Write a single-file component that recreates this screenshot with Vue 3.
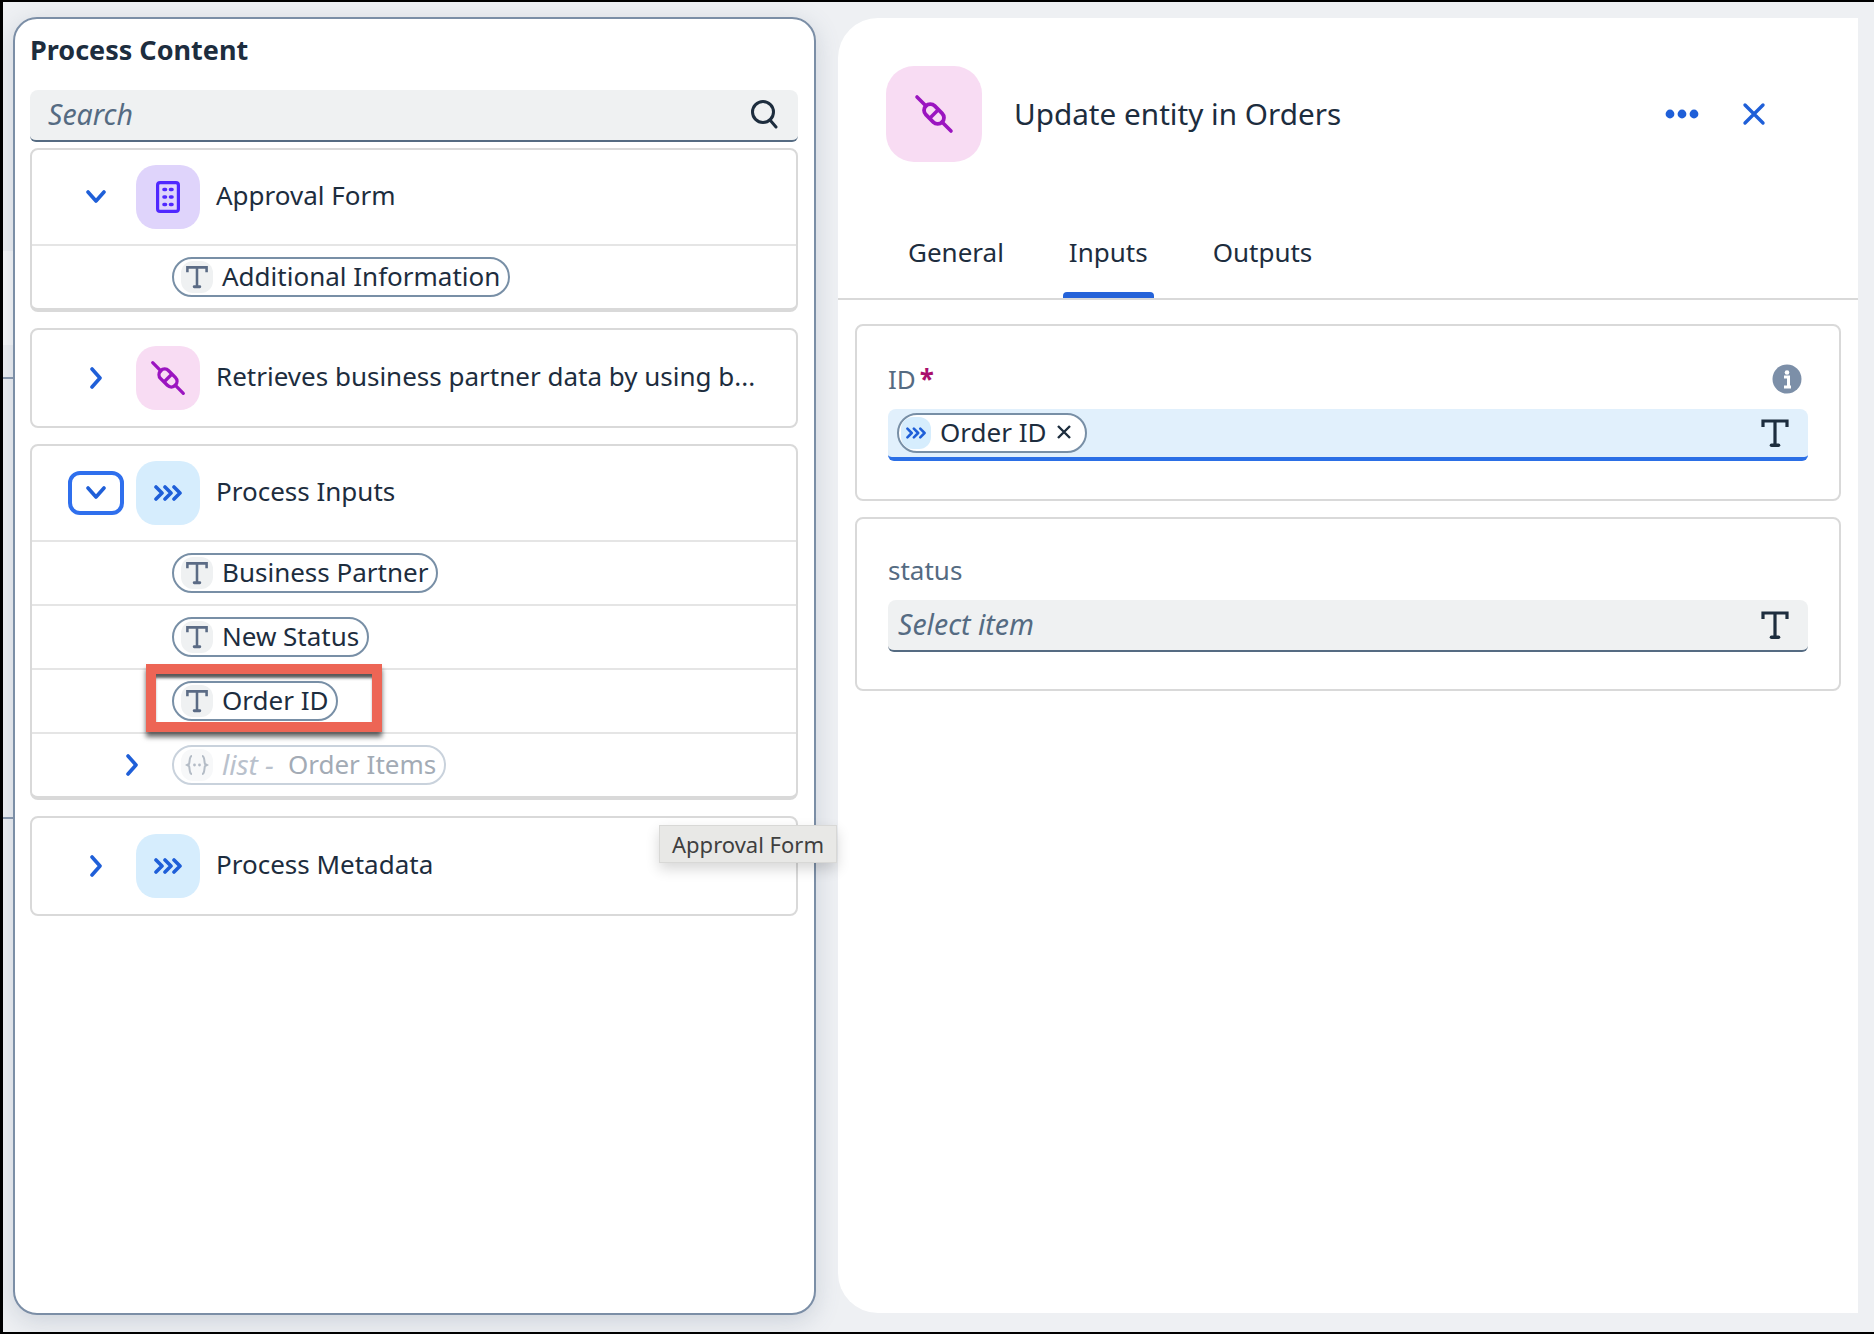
<template>
  <div class="page">
    <svg class="sprite" aria-hidden="true">
      <symbol id="i-link" viewBox="0 0 40 40">
        <path d="M3 3 L12 12 M28 28 L37 37" fill="none" stroke="currentColor" stroke-width="3.6" stroke-linecap="round" />
        <rect x="8.5" y="13.75" width="23" height="12.5" rx="6.25" transform="rotate(45 20 20)" fill="none" stroke="currentColor" stroke-width="3.8" />
        <path d="M15 25 L25 15" fill="none" stroke="currentColor" stroke-width="3.6" />
      </symbol>
      <symbol id="i-arrows" viewBox="0 0 28 16">
        <path d="M2 2 L8 8 L2 14 M11 2 L17 8 L11 14 M20 2 L26 8 L20 14" fill="none" stroke="currentColor" stroke-width="3.6" stroke-linecap="round" stroke-linejoin="round" />
      </symbol>
      <symbol id="i-t" viewBox="0 0 30 30">
        <path d="M3 9 V3 H27 V9 M15 3 V27" fill="none" stroke="currentColor" stroke-width="3.2" />
        <path d="M11.5 27.2 H18.5" fill="none" stroke="currentColor" stroke-width="3.6" stroke-linecap="round" />
      </symbol>
    </svg>

    <!-- background of the page behind the dialog, only visible in the left gutter -->
    <div class="gutter-band"></div>
    <div class="gutter-line first"></div>
    <div class="gutter-line second"></div>

    <section class="content-card">
      <h2 class="card-title">Process Content</h2>
      <div class="search">
        <span>Search</span>
        <svg width="30" height="30" viewBox="0 0 30 30">
          <circle cx="14" cy="13" r="10.5" fill="none" stroke="#1d2d3e" stroke-width="3" />
          <path d="M21 21 L27 28" stroke="#1d2d3e" stroke-width="3" stroke-linecap="round" />
        </svg>
      </div>

      <div class="group open">
        <div class="group-head">
          <button type="button" class="toggle">
            <svg width="20" height="14" viewBox="0 0 20 14"><path d="M2 2 L10 11 L18 2" /></svg>
          </button>
          <span class="tile purple">
            <svg width="24" height="32" viewBox="0 0 24 32">
              <rect x="1.6" y="1.6" width="20.8" height="28.8" rx="2.5" fill="none" stroke="currentColor" stroke-width="3.2" />
              <path d="M8 8.5 H9.5 M14.5 8.5 H16 M8 16 H9.5 M14.5 16 H16 M8 23.5 H9.5 M14.5 23.5 H16" stroke="currentColor" stroke-width="3.6" stroke-linecap="round" />
            </svg>
          </span>
          <span class="group-name">Approval Form</span>
        </div>
        <div class="row last">
          <span class="chip"><span class="chip-icon"><svg width="24" height="24"><use href="#i-t" /></svg></span>Additional Information</span>
        </div>
      </div>

      <div class="group">
        <div class="group-head">
          <button type="button" class="toggle">
            <svg width="14" height="22" viewBox="0 0 14 22"><path d="M3 2 L11 11 L3 20" /></svg>
          </button>
          <span class="tile pink"><svg width="36" height="36"><use href="#i-link" /></svg></span>
          <span class="group-name">Retrieves business partner data by using b...</span>
        </div>
      </div>

      <div class="group open">
        <div class="group-head">
          <button type="button" class="toggle focused">
            <svg width="20" height="14" viewBox="0 0 20 14"><path d="M2 2 L10 11 L18 2" /></svg>
          </button>
          <span class="tile blue"><svg width="28" height="16"><use href="#i-arrows" /></svg></span>
          <span class="group-name">Process Inputs</span>
        </div>
        <div v-for="name in inputs" :key="name" class="row">
          <span class="chip"><span class="chip-icon"><svg width="24" height="24"><use href="#i-t" /></svg></span>{{ name }}</span>
        </div>
        <div class="row last">
          <svg class="row-chevron" width="14" height="22" viewBox="0 0 14 22"><path d="M3 2 L11 11 L3 20" /></svg>
          <span class="chip disabled">
            <span class="chip-icon">
              <svg width="24" height="24" viewBox="0 0 24 24">
                <path d="M7 3 C4 3 5 9 4 11 L2 12 L4 13 C5 15 4 21 7 21 M17 3 C20 3 19 9 20 11 L22 12 L20 13 C19 15 20 21 17 21" fill="none" stroke="currentColor" stroke-width="2" />
                <circle cx="9.5" cy="12" r="1.4" fill="currentColor" />
                <circle cx="14.5" cy="12" r="1.4" fill="currentColor" />
              </svg>
            </span>
            <em>list -</em><span class="list-name">Order Items</span>
          </span>
        </div>
        <div class="marker"></div>
      </div>

      <div class="group">
        <div class="group-head">
          <button type="button" class="toggle">
            <svg width="14" height="22" viewBox="0 0 14 22"><path d="M3 2 L11 11 L3 20" /></svg>
          </button>
          <span class="tile blue"><svg width="28" height="16"><use href="#i-arrows" /></svg></span>
          <span class="group-name">Process Metadata</span>
        </div>
      </div>

      <div class="tooltip">Approval Form</div>
    </section>

    <section class="detail">
      <header class="detail-head">
        <span class="tile pink large"><svg width="40" height="40"><use href="#i-link" /></svg></span>
        <h1>Update entity in Orders</h1>
        <svg class="dots" width="34" height="10" viewBox="0 0 34 10">
          <circle cx="5" cy="5" r="4.4" /><circle cx="17" cy="5" r="4.4" /><circle cx="29" cy="5" r="4.4" />
        </svg>
        <svg class="close" width="24" height="24" viewBox="0 0 24 24">
          <path d="M3 3 L21 21 M21 3 L3 21" />
        </svg>
      </header>

      <nav class="tabs">
        <span v-for="tab in tabs" :key="tab" class="tab" :class="{ active: tab === 'Inputs' }">{{ tab }}</span>
      </nav>

      <div class="form">
        <div class="form-card">
          <div class="label-row">
            <label>ID<b>*</b></label>
            <svg width="30" height="30" viewBox="0 0 30 30">
              <circle cx="15" cy="15" r="14.5" fill="#7c8fa8" />
              <circle cx="15" cy="8.5" r="2.3" fill="#fff" />
              <path d="M12 13 H16.5 V22 M12 23 H19" fill="none" stroke="#fff" stroke-width="3" />
            </svg>
          </div>
          <div class="field filled">
            <span class="chip token">
              <span class="chip-icon token-icon"><svg width="20" height="12"><use href="#i-arrows" /></svg></span>
              Order ID
              <svg class="token-x" width="16" height="16" viewBox="0 0 16 16"><path d="M2 2 L14 14 M14 2 L2 14" /></svg>
            </span>
            <svg class="field-t" width="30" height="30"><use href="#i-t" /></svg>
          </div>
        </div>
        <div class="form-card">
          <div class="label-row"><label>status</label></div>
          <div class="field">
            <span class="placeholder">Select item</span>
            <svg class="field-t" width="30" height="30"><use href="#i-t" /></svg>
          </div>
        </div>
      </div>
    </section>
  </div>
</template>

<script setup>
const inputs = ['Business Partner', 'New Status', 'Order ID']
const tabs = ['General', 'Inputs', 'Outputs']
</script>

<style>
html,
body {
  margin: 0;
  background: #eef0f3;
}
</style>

<style scoped>
* {
  box-sizing: border-box;
}

.page {
  position: relative;
  display: flex;
  gap: 22px;
  width: 1874px;
  height: 1334px;
  padding: 15px 0 17px 10px;
  overflow: hidden;
  font-family: "Noto Sans", sans-serif;
  color: #1d2d3e;
  background: #eef0f3;
  border-top: 2px solid #000;
  border-bottom: 2px solid #000;
  border-left: 3px solid #000;
}

.sprite {
  position: absolute;
  width: 0;
  height: 0;
}

.gutter-band {
  position: absolute;
  top: 249px;
  left: 0;
  width: 10px;
  height: 94px;
  background: #f7f8f9;
}

.gutter-line {
  position: absolute;
  left: 0;
  width: 10px;
  height: 2px;
  background: #8a99ae;
}

.gutter-line.first {
  top: 375px;
}

.gutter-line.second {
  top: 815px;
}

.content-card {
  position: relative;
  flex: none;
  width: 803px;
  padding: 13px 16px 13px 15px;
  background: #fff;
  border: 2px solid #7b8ea6;
  border-radius: 24px;
  box-shadow: 0 6px 24px rgba(85, 107, 130, 0.22);
}

.card-title {
  margin: 0 0 22px;
  height: 36px;
  font-size: 27px;
  line-height: 36px;
  font-weight: 700;
}

.search {
  display: flex;
  align-items: center;
  justify-content: space-between;
  height: 52px;
  margin-bottom: 6px;
  padding: 0 19px 2px 18px;
  background: #eff1f2;
  border-bottom: 2px solid #556b82;
  border-radius: 8px 8px 6px 6px;
  font-size: 28.5px;
  font-style: italic;
  color: #556b82;
}

.group {
  margin-bottom: 16px;
  border: 2px solid #d9d9d9;
  border-radius: 8px;
  background: #fff;
}

.group.open {
  position: relative;
  border-bottom-width: 4px;
}

.group-head {
  display: flex;
  align-items: center;
  height: 96px;
  padding-left: 36px;
}

.open .group-head {
  border-bottom: 2px solid #e5e5e5;
}

.toggle {
  display: flex;
  flex: none;
  align-items: center;
  justify-content: center;
  width: 56px;
  height: 44px;
  margin-right: 12px;
  padding: 0;
  background: none;
  border: 3px solid transparent;
  border-radius: 12px;
}

.toggle.focused {
  border: 4px solid #2f6fed;
}

.toggle path,
.row-chevron path {
  fill: none;
  stroke: #1f5fd8;
  stroke-width: 3.6;
  stroke-linecap: round;
  stroke-linejoin: round;
}

.tile {
  display: flex;
  flex: none;
  align-items: center;
  justify-content: center;
  width: 64px;
  height: 64px;
  border-radius: 20px;
}

.tile.large {
  width: 96px;
  height: 96px;
  border-radius: 28px;
}

.purple {
  color: #5028ff;
  background: #dfd4fb;
}

.pink {
  color: #9b15c0;
  background: #f8dcf3;
}

.blue {
  color: #1f5fd8;
  background: #d6edfd;
}

.group-name {
  margin-left: 16px;
  padding-bottom: 4px;
  font-size: 26px;
  white-space: nowrap;
}

.row {
  display: grid;
  grid-template-columns: 140px auto;
  justify-content: start;
  align-items: center;
  height: 64px;
  border-bottom: 2px solid #e5e5e5;
}

.row.last {
  height: 62px;
  border-bottom: 0;
}

.row .chip {
  grid-column: 2;
}

.row-chevron {
  grid-column: 1;
  justify-self: end;
  margin-right: 33px;
}

.chip {
  display: inline-flex;
  align-items: center;
  height: 40px;
  padding: 0 8px 2px 7px;
  font-size: 26px;
  white-space: nowrap;
  background: #fff;
  border: 2px solid #788fa6;
  border-radius: 20px;
}

.chip-icon {
  display: flex;
  flex: none;
  align-items: center;
  justify-content: center;
  width: 32px;
  height: 32px;
  margin-right: 9px;
  margin-bottom: -2px;
  color: #5b6b85;
  background: #eff1f2;
  border-radius: 12px;
}

.chip.disabled {
  color: #a3abb5;
  border-color: #c9d2dc;
}

.chip.disabled .chip-icon {
  color: #b4bcc6;
  background: #f7f8f9;
}

.chip.disabled em {
  font-size: 28px;
  color: #b9c1cc;
}

.list-name {
  margin-left: 14px;
}

.marker {
  position: absolute;
  top: 218px;
  left: 114px;
  width: 236px;
  height: 68px;
  border: 10px solid #ed6555;
  box-shadow: 0 5px 5px rgba(0, 0, 0, 0.6), inset 0 5px 3px -1px rgba(0, 0, 0, 0.65);
  pointer-events: none;
}

.tooltip {
  position: absolute;
  top: 806px;
  left: 644px;
  width: 178px;
  height: 38px;
  font-size: 22px;
  line-height: 36px;
  text-align: center;
  color: #3f3f3f;
  background: #e8e8e6;
  border: 1px solid #d8d8d6;
  box-shadow: 0 6px 14px rgba(0, 0, 0, 0.16);
}

.detail {
  flex: none;
  width: 1020px;
  margin: 1px 0 2px;
  background: #fff;
  border-radius: 40px 0 0 40px;
}

.detail-head {
  display: flex;
  align-items: center;
  height: 96px;
  margin-top: 48px;
  padding-left: 48px;
}

.detail-head h1 {
  margin: 0 0 0 32px;
  padding-bottom: 2px;
  font-size: 29.7px;
  font-weight: 400;
}

.dots {
  margin-left: auto;
  fill: #1f5fd8;
}

.close {
  margin: 0 92px 0 43px;
}

.close path {
  fill: none;
  stroke: #1f5fd8;
  stroke-width: 3.4;
  stroke-linecap: round;
}

.tabs {
  display: flex;
  gap: 65px;
  height: 138px;
  padding: 72px 0 0 70px;
  border-bottom: 2px solid #d9d9d9;
}

.tab {
  position: relative;
  height: 36px;
  font-size: 26px;
  line-height: 36px;
}

.tab.active::after {
  content: "";
  position: absolute;
  left: -6px;
  right: -6px;
  top: 58px;
  height: 6px;
  background: #2563d9;
  border-radius: 4px 4px 0 0;
}

.form {
  display: flex;
  flex-direction: column;
  gap: 16px;
  padding: 24px 17px 0;
}

.form-card {
  padding: 37px 31px 0 31px;
  background: #fff;
  border: 2px solid #d9d9d9;
  border-radius: 8px;
}

.form-card:first-child {
  height: 177px;
}

.form-card:last-child {
  height: 174px;
  padding-top: 34.5px;
}

.label-row {
  display: flex;
  align-items: center;
  justify-content: space-between;
  height: 36px;
  margin-bottom: 10px;
  padding: 0 6px 4px 0;
  font-size: 26px;
  color: #556b82;
}

.label-row b {
  margin-left: 4px;
  font-weight: 700;
  color: #aa0f6c;
}

.field {
  display: flex;
  align-items: center;
  justify-content: space-between;
  height: 52px;
  padding: 0 18px 0 10px;
  background: #eff1f2;
  border-bottom: 2px solid #556b82;
  border-radius: 8px 8px 6px 6px;
}

.field.filled {
  padding-left: 9px;
  background: #e1f0fc;
  border-bottom: 4px solid #2b6fe6;
}

.placeholder {
  padding-bottom: 2px;
  font-size: 28.5px;
  font-style: italic;
  color: #556b82;
}

.field-t {
  color: #1d2d3e;
}

.token {
  padding: 0 13px 2px 2px;
}

.token-icon {
  width: 30px;
  margin-right: 9px;
  color: #1f5fd8;
  background: #d6edfd;
}

.token-x {
  margin-left: 10px;
}

.token-x path {
  fill: none;
  stroke: #1d2d3e;
  stroke-width: 2.4;
}
</style>
